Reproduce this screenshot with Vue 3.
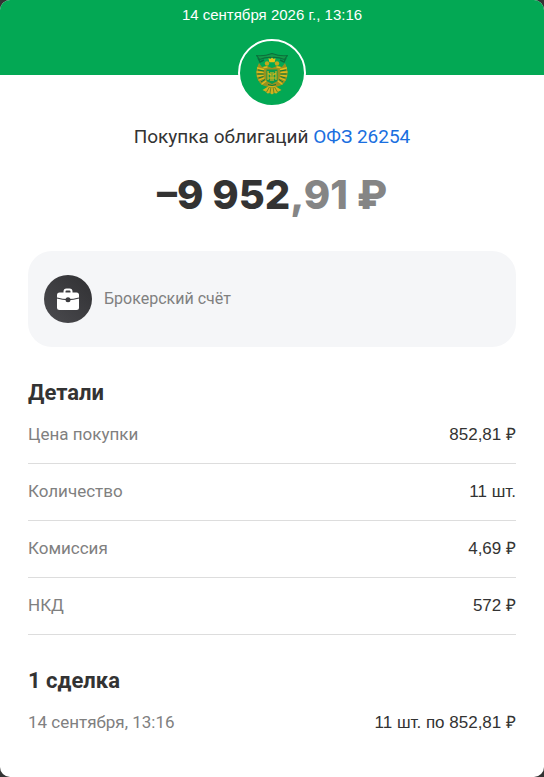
<script setup>
const details = [
  { label: 'Цена покупки', value: '852,81 ₽' },
  { label: 'Количество', value: '11 шт.' },
  { label: 'Комиссия', value: '4,69 ₽' },
  { label: 'НКД', value: '572 ₽' },
]
const deals = [{ label: '14 сентября, 13:16', value: '11 шт. по 852,81 ₽' }]
</script>

<template>
  <main class="sheet">
    <header class="head">
      <time class="date" datetime="2026-09-14T13:16">14 сентября 2026 г., 13:16</time>
      <div class="logo">
        <svg viewBox="0 0 64 64" width="64" height="64" aria-hidden="true">
          <!-- ribbon -->
          <path d="M16.500 14.500 Q24 15.500 32 12.500 Q40 15.500 47.500 14.500 L44.500 18.500 Q38 16 32 16.500 Q26 16 19.500 18.500Z" fill="#149a49" stroke="#0b6f3c" stroke-width="1.200" stroke-linejoin="round" />
          <path d="M18 17l2 4 4-2M46 17l-2 4-4-2" fill="none" stroke="#0b6f3c" stroke-width="1.500" />
          <!-- crown and heads -->
          <path d="M32 16.500l1.500 1.500 2-.8-.8 4h-5.400l-.8-4 2 .8z" fill="#e8c41a" />
          <circle cx="27" cy="22.500" r="2.200" fill="#c4a81c" />
          <circle cx="37" cy="22.500" r="2.200" fill="#c4a81c" />
          <!-- wings and body -->
          <path d="M19 22l3 4 5-1 5 2 5-2 5 1 3-4c3 6 3.500 12 1 17-2 4-5 6-8.500 6.500L32 47l-5.500-1.500C23 45 20 43 18 39c-2.500-5-2-11 1-17z" fill="#99911f" />
          <g fill="none" stroke="#e0bd1d" stroke-width="1.300" stroke-linecap="round">
            <path d="M17.500 27l6 1.500M17 31l6 .5M17.500 35l5.500-.5M19 39l5-2M46.500 27l-6 1.500M47 31l-6 .5M46.500 35l-5.500-.5M45 39l-5-2M22 43l4-3M42 43l-4-3M24 26.500l3-.5M40 26.500l-3-.5" />
          </g>
          <g fill="none" stroke="#0c7d3c" stroke-width="1">
            <path d="M18 29l6 1M17.500 33h6M18.500 37l5-1.500M21 41l4-2.500M46 29l-6 1M46.500 33h-6M45.500 37l-5-1.500M43 41l-4-2.500M28 43.500q4 2 8 0" />
          </g>
          <!-- tail -->
          <path d="M29 45h6l6.500 4-3 1.500-2 2-2.500-.5-2 1.500-2-1.500-2.500.5-2-2-3-1.500z" fill="#d0b21d" />
          <path d="M29.500 46l-3 5M31 46l-1 6M33 46l1 6M34.500 46l3 5" fill="none" stroke="#4b7a28" stroke-width=".8" />
          <!-- shield -->
          <path d="M26.500 28.500h11V40L32 43l-5.500-3z" fill="#0a9b4c" />
          <path d="M28 30v9M31 31v9M33 31v9M36 30v9M28 32l3 2M36 32l-3 2M28 37h8" fill="none" stroke="#d2b51f" stroke-width="1.200" />
        </svg>
      </div>
    </header>

    <div class="body">
      <h1 class="title">Покупка облигаций <a href="#">ОФЗ 26254</a></h1>
      <p class="amount">–9 952<span>,91 ₽</span></p>

      <section class="account">
        <svg class="case" viewBox="0 0 48 48" width="48" height="48" aria-hidden="true">
          <defs>
            <linearGradient id="case-bg" x1="0" y1="1" x2="1" y2="0">
              <stop offset="0" stop-color="#4b4b4f" />
              <stop offset="1" stop-color="#303033" />
            </linearGradient>
          </defs>
          <circle cx="24" cy="24" r="24" fill="url(#case-bg)" />
          <path d="M20.500 19v-2.500q0-2 2-2h3q2 0 2 2V19" fill="none" stroke="#fff" stroke-width="2" />
          <path d="M15.500 17.500h17q2.500 0 2.500 2.500v12.500q0 2.500-2.500 2.500h-17q-2.500 0-2.500-2.500V20q0-2.500 2.500-2.500z" fill="#fff" />
          <path d="M13 23q11 3.200 22 0" fill="none" stroke="#3b3b3f" stroke-width="1.300" />
          <circle cx="24" cy="24.700" r="2.500" fill="#3b3b3f" />
        </svg>
        <span>Брокерский счёт</span>
      </section>

      <h2>Детали</h2>
      <dl>
        <div v-for="row in details" :key="row.label" class="row line">
          <dt>{{ row.label }}</dt>
          <dd>{{ row.value }}</dd>
        </div>
      </dl>

      <h2>1 сделка</h2>
      <dl>
        <div v-for="row in deals" :key="row.label" class="row">
          <dt>{{ row.label }}</dt>
          <dd>{{ row.value }}</dd>
        </div>
      </dl>
    </div>
  </main>
</template>

<style>
body {
  background: #333;
}
</style>

<style scoped>
.sheet {
  box-sizing: border-box;
  min-height: 100vh;
  overflow: hidden;
  border-radius: 10px;
  background: #fff;
  color: #333;
  font-family: Roboto, "Liberation Sans", sans-serif;
  font-size: 16px;
  line-height: 24px;
}
.head {
  display: flex;
  flex-direction: column;
  align-items: center;
  gap: 14px;
  height: 75px;
  background: #03a854;
}
.date {
  padding-top: 5px;
  line-height: 20px;
  font-family: "Liberation Sans", sans-serif;
  font-size: 15px;
  color: #fff;
}
.logo {
  flex: none;
  width: 64px;
  height: 64px;
  border: 2px solid #fff;
  border-radius: 50%;
  background: #03a854;
}
.logo svg {
  display: block;
}
.body {
  padding: 48px 28px 24px;
}
.title {
  margin: 0;
  font-size: 19px;
  font-weight: 400;
  line-height: 28px;
  text-align: center;
}
.title a {
  color: #1a6fe0;
  text-decoration: none;
}
.amount {
  margin: 20px 0 32px;
  font-family: Inter, sans-serif;
  font-size: 40px;
  font-weight: 800;
  line-height: 48px;
  text-align: center;
}
.amount span {
  color: #858585;
}
.account {
  display: flex;
  align-items: center;
  gap: 12px;
  padding: 24px 16px;
  border-radius: 24px;
  background: #f5f6f8;
  color: #808080;
}
.case {
  flex: none;
}
h2 {
  margin: 32px 0 0;
  font-size: 22px;
  font-weight: 700;
  line-height: 28px;
}
dl {
  margin: 0;
}
.row {
  display: flex;
  align-items: baseline;
  justify-content: space-between;
  padding: 15px 0 16px;
  font-size: 17px;
}
.line {
  border-bottom: 1px solid #ddd;
}
dt {
  color: #808080;
}
dd {
  margin: 0;
  font-family: "Liberation Sans", sans-serif;
}
</style>
